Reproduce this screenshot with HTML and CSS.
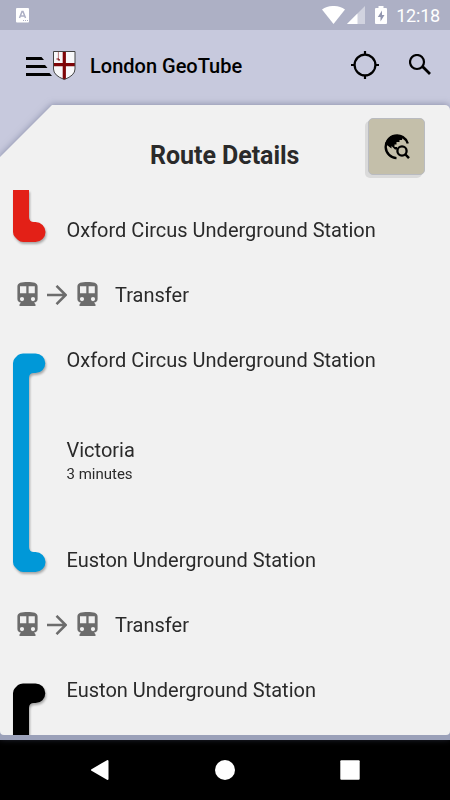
FILE: index.html
```html
<!DOCTYPE html>
<html lang="en">
<head>
    <meta charset="UTF-8">
    <meta name="viewport" content="width=device-width, initial-scale=1.0">
    <title>London GeoTube</title>
    <link rel="stylesheet" href="styles.css">
</head>
<body>
    <!-- Shared icons -->
    <svg class="sprite" width="0" height="0">
        <symbol id="train" viewBox="0 0 24 24">
            <path d="M12.500 0C6.500 0 2.400.7 2.400 4.500v12.500c0 2 1.600 3.500 3.500 3.500L4.500 22.500V24h16v-1.500l-1.400-2c1.900 0 3.500-1.500 3.500-3.500V4.500c0-3.800-4-4.500-10.100-4.500zM7 19.200a2.100 2.100 0 1 1 0-4.200 2.100 2.100 0 0 1 0 4.200zM11.300 11.200H5V4.300h6.300zM13.600 11.200V4.300h6.200v6.900zM18 19.200a2.100 2.100 0 1 1 0-4.200 2.100 2.100 0 0 1 0 4.200z"/>
        </symbol>
        <symbol id="arrow" viewBox="0 0 20 20">
            <path d="M0 10h18.500M9.500.800l9.200 9.200-9.200 9.200" fill="none" stroke="currentColor" stroke-width="2.500"/>
        </symbol>
    </svg>

    <div class="screen">
        <!-- Status bar -->
        <div class="status-bar">
            <svg class="app-notice" width="13" height="15" viewBox="0 0 13 15">
                <rect width="13" height="14.500" rx="1" fill="#fff"/>
                <path d="M3.500 10L6 3.500h1L9.500 10M4.500 8h4" fill="none" stroke="#adb0c5" stroke-width="1.500"/>
                <path d="M7 12.500h5" stroke="#adb0c5" stroke-width="1" stroke-dasharray="1 1"/>
            </svg>
            <svg class="wifi" width="23" height="18" viewBox="0 0 23 18">
                <path d="M0 3.500C6.500-1.200 16.500-1.200 23 3.500L11.500 18z" fill="#fff"/>
            </svg>
            <svg class="signal" width="18" height="18" viewBox="0 0 18 18">
                <path d="M0 18L18 0v18z" fill="#d1d3df"/>
                <path d="M0 18L10.500 7.500V18z" fill="#fff"/>
            </svg>
            <svg class="battery" width="12" height="18" viewBox="0 0 12 18">
                <path d="M1 2h2.500V0h5v2H11q1 0 1 1v14q0 1-1 1H1q-1 0-1-1V3q0-1 1-1z" fill="#fff"/>
                <path d="M7 4.500L2.800 11H5.500v4.500L9.500 9H7z" fill="#9296b0"/>
            </svg>
            <span class="clock">12:18</span>
        </div>

        <!-- App bar -->
        <header class="app-bar">
            <svg class="logo" width="50" height="30" viewBox="0 0 50 30">
                <path d="M0 6h15.500l2.500 3H0zM0 14h19l2.500 3H0zM0 22h23.500l2.500 3H0z"/>
                <path d="M27.500.500h21.500v17.500q0 6.500-10.700 10.500Q27.500 24.500 27.500 18z" fill="#f8f8fa"/>
                <path d="M36.700.500h3.200V28l-1.600.6-1.600-.6zM27.500 12h21.500v3.200H27.500z" fill="#7f0508"/>
                <path d="M32.400 1v9" stroke="#b77a7d" stroke-width="1"/>
                <path d="M30.500 8h2.500v1h1" fill="none" stroke="#7f0508" stroke-width="1"/>
                <path d="M27.500.500h21.500v17.500q0 6.500-10.700 10.500Q27.500 24.500 27.500 18z" fill="none" stroke="#444"/>
            </svg>
            <h1>London GeoTube</h1>
            <svg class="locate" width="28" height="28" viewBox="0 0 28 28">
                <circle cx="14" cy="14" r="10.400" fill="none" stroke="#000" stroke-width="2.200"/>
                <path d="M14 0v4M14 24v4M0 14h4M24 14h4" stroke="#000" stroke-width="2.200"/>
            </svg>
            <svg class="search" width="22" height="22" viewBox="0 0 22 22">
                <circle cx="8" cy="8" r="7" fill="none" stroke="#000" stroke-width="2.200"/>
                <path d="M13 13l1.500.5 6.500 6.500" fill="none" stroke="#000" stroke-width="2.800"/>
            </svg>
        </header>

        <!-- Route card -->
        <main class="card-shadow">
            <div class="card">
                <div class="card-header">
                    <h2>Route Details</h2>
                    <button type="button" class="map-button">
                        <svg width="28" height="26" viewBox="0 0 28 26">
                            <path d="M24.800 9.500A11.300 11.300 0 1 0 13.500 24.100" fill="none" stroke="#000" stroke-width="2.400"/>
                            <path d="M2 10C4 4 8 1 14 1c2.500 0 4.500.5 6 1.500L19 6h-2.500v2h-3v2.500h-2V13H14v2.500h-2L8.500 12v2.500L2.500 10z"/>
                            <circle cx="19" cy="17" r="4.600" fill="none" stroke="#000" stroke-width="2.300"/>
                            <path d="M22 20l4 4.200" stroke="#000" stroke-width="2.500"/>
                        </svg>
                    </button>
                </div>

                <div class="route">
                    <div class="leg leg-end">
                        <svg class="line central" width="36" height="56" viewBox="0 0 36 56">
                            <path d="M0 0h16v27q0 5 5 5h1.500a10 10 0 0 1 0 20H10Q7 52 5 50L2 47Q0 45 0 42z"/>
                        </svg>
                        <div class="stops">
                            <div class="station">Oxford Circus Underground Station</div>
                        </div>
                    </div>

                    <div class="transfer">
                        <svg class="train"><use href="#train"/></svg>
                        <svg class="arrow"><use href="#arrow"/></svg>
                        <svg class="train"><use href="#train"/></svg>
                        <span>Transfer</span>
                    </div>

                    <div class="leg">
                        <svg class="line victoria" width="36" height="223" viewBox="0 0 36 223">
                            <path d="M10 .500h12.500a9.800 9.800 0 0 1 0 19.600h-1.500q-5 0-5 5v168.900q0 5 5 5h1.500a10 10 0 0 1 0 20H10Q7 219 5 217L2 214Q0 212 0 209V10Q0 7 2 5L5 2Q7 .500 10 .500z"/>
                        </svg>
                        <div class="stops">
                            <div class="station">Oxford Circus Underground Station</div>
                            <div class="ride">
                                <div class="ride-name">Victoria</div>
                                <div class="ride-time">3 minutes</div>
                            </div>
                            <div class="station">Euston Underground Station</div>
                        </div>
                    </div>

                    <div class="transfer">
                        <svg class="train"><use href="#train"/></svg>
                        <svg class="arrow"><use href="#arrow"/></svg>
                        <svg class="train"><use href="#train"/></svg>
                        <span>Transfer</span>
                    </div>

                    <div class="leg">
                        <svg class="line northern" width="36" height="223" viewBox="0 0 36 223">
                            <path d="M10 .500h12.500a9.800 9.800 0 0 1 0 19.600h-1.500q-5 0-5 5v197.900H0V10Q0 7 2 5L5 2Q7 .500 10 .500z"/>
                        </svg>
                        <div class="stops">
                            <div class="station">Euston Underground Station</div>
                        </div>
                    </div>
                </div>
            </div>
        </main>

        <!-- Navigation bar -->
        <nav class="nav-bar">
            <svg width="20" height="22" viewBox="0 0 20 22">
                <path d="M2 11L17.500 2v18z" fill="#fff" stroke="#fff" stroke-width="2" stroke-linejoin="round"/>
            </svg>
            <svg width="20" height="20" viewBox="0 0 20 20">
                <circle cx="10" cy="10" r="10" fill="#fff"/>
            </svg>
            <svg width="20" height="20" viewBox="0 0 20 20">
                <rect x=".3" y=".3" width="19.400" height="19.400" rx="1" fill="#fff"/>
            </svg>
        </nav>
    </div>
</body>
</html>
```
FILE: styles.css
```css
* {
    box-sizing: border-box;
}
body {
    margin: 0;
    font-family: Roboto, sans-serif;
    color: #2a2a2a;
}
svg {
    display: block;
    flex: none;
}
.sprite {
    display: none;
}
.screen {
    width: 450px;
    height: 800px;
    display: flex;
    flex-direction: column;
    overflow: hidden;
    background-color: #c7c9dd;
}

/* Status bar */
.status-bar {
    height: 30px;
    flex: none;
    display: flex;
    align-items: center;
    padding: 0 10px 0 16px;
    background-color: #adb0c5;
    color: #fff;
}
.wifi {
    margin-left: auto;
}
.signal {
    margin-left: 2px;
}
.battery {
    margin-left: 10px;
}
.clock {
    margin-left: 9px;
    font-size: 18px;
    line-height: 30px;
    padding-top: 1px;
    letter-spacing: -0.2px;
}

/* App bar */
.app-bar {
    height: 75px;
    flex: none;
    display: flex;
    align-items: center;
    padding: 0 19px 5px 26px;
}
.app-bar h1 {
    margin: 0 auto 0 14px;
    padding-top: 2px;
    font-size: 20px;
    font-weight: 500;
    line-height: 24px;
    color: #000;
}
.logo {
    margin-top: 2px;
}
.search {
    margin-left: 30px;
}

/* Card */
.card-shadow {
    height: 635px;
    flex: none;
    padding-bottom: 5px;
    background: linear-gradient(#9ba1b9, #9ba1b9) bottom / 100% 12px no-repeat;
    filter: drop-shadow(0 -1px 3px rgba(90, 95, 130, 0.5));
}
.card {
    height: 630px;
    display: flex;
    flex-direction: column;
    background-color: #f1f1f1;
    border-radius: 0 5px 4px 4px;
    clip-path: polygon(52px 0, 100% 0, 100% 100%, 0 100%, 0 52px);
}
.card-header {
    height: 85px;
    flex: none;
    display: flex;
    align-items: flex-start;
    padding: 13px 25px 0 150px;
}
.card-header h2 {
    margin: 23px auto 0 0;
    font-size: 25px;
    font-weight: 700;
    line-height: 30px;
    letter-spacing: -0.05px;
    white-space: nowrap;
}
.map-button {
    width: 57px;
    height: 57px;
    padding: 0;
    display: flex;
    align-items: center;
    justify-content: center;
    background-color: #c4bfaa;
    border: 1px solid #b9bbc0;
    border-radius: 5px;
    box-shadow: -3px 3px 0 #dadada;
}

/* Route */
.route {
    flex: 1;
    min-height: 0;
    overflow: hidden;
}
.leg {
    height: 240px;
    display: flex;
    padding-left: 12.7px;
}
.leg-end {
    height: 60px;
}
.line {
    margin-top: 13px;
    overflow: visible;
    filter: drop-shadow(1px 2px 1px rgba(0, 0, 0, 0.3));
}
.leg-end .line {
    margin-top: 0;
}
.central {
    fill: #e32017;
}
.victoria {
    fill: #0098d8;
}
.northern {
    fill: #000;
}
.stops {
    flex: 1;
    display: flex;
    flex-direction: column;
    margin-left: 17.800px;
}
.leg-end .stops {
    justify-content: flex-end;
}
.station {
    height: 40px;
    font-size: 20px;
    line-height: 40px;
    white-space: nowrap;
}
.ride {
    height: 160px;
    padding-top: 58px;
}
.ride-name {
    font-size: 20px;
    line-height: 24px;
}
.ride-time {
    font-size: 15px;
    line-height: 24px;
}
.transfer {
    height: 90px;
    display: flex;
    align-items: center;
    padding-left: 15px;
    font-size: 20px;
}
.train {
    width: 24px;
    height: 24px;
    fill: #6c6c6c;
    margin-top: -2px;
}
.arrow {
    width: 20px;
    height: 20px;
    margin: -1px 8px 0;
    color: #6c6c6c;
}
.transfer span {
    margin-left: 16px;
}

/* Navigation bar */
.nav-bar {
    height: 60px;
    flex: none;
    display: flex;
    align-items: center;
    justify-content: space-between;
    padding: 0 90px;
    background-color: #000;
}
```
